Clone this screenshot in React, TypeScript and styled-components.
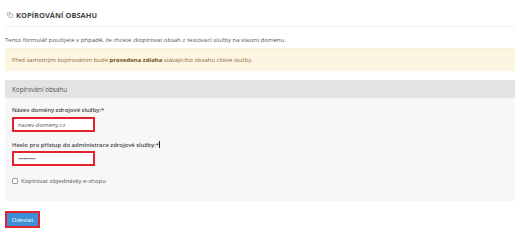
import React from 'react';
import styled, { createGlobalStyle } from 'styled-components';
import { Copy } from 'lucide-react';

const GlobalStyle = createGlobalStyle`
  html, body {
    margin: 0;
    padding: 0;
    background: #ffffff;
    font-family: "Open Sans", "Liberation Sans", sans-serif;
    color: #555555;
  }
  * { box-sizing: border-box; }
`;

const Page = styled.div`
  padding: 0 5px;
  width: 520px;
`;

const TitleBar = styled.div`
  height: 27px;
  padding: 4px 0 0 2px;
  display: flex;
  align-items: center;
  gap: 3px;
  border-bottom: 1px solid #efefef;
  color: #7a7a7a;
`;

const Title = styled.h1`
  margin: 0;
  font-size: 7.4px;
  font-weight: 700;
  color: #444444;
  letter-spacing: 0.05px;
`;

const Intro = styled.p`
  margin: 0 0 4px;
  padding-top: 9px;
  font-size: 6px;
  line-height: 8px;
  color: #555555;
`;

const Alert = styled.div`
  height: 23px;
  padding: 0 7px;
  line-height: 23px;
  font-size: 5.95px;
  background: #fcf5e2;
  border-top: 1px solid #faefd3;
  color: #8a6d3b;

  b {
    color: #6b5020;
    font-weight: 700;
  }
`;

const Panel = styled.section`
  margin-top: 9px;
  background: #f7f7f7;
`;

const PanelHeader = styled.div`
  height: 18px;
  padding-left: 7px;
  display: flex;
  align-items: center;
  background: #e3e3e3;
  font-size: 6.3px;
  color: #555555;
`;

const PanelBody = styled.div`
  padding: 8px 7px 16px;
`;

const Label = styled.label<{ $gap?: number }>`
  display: block;
  margin-top: ${(p) => p.$gap ?? 0}px;
  font-size: 5.9px;
  line-height: 8px;
  font-weight: 600;
  color: #444444;
`;

const Caret = styled.span`
  display: inline-block;
  width: 1px;
  height: 7px;
  margin-left: 0.5px;
  vertical-align: -1px;
  background: #222222;
`;

const Input = styled.input<{ $gap: number }>`
  display: block;
  margin-top: ${(p) => p.$gap}px;
  width: 83px;
  height: 15px;
  padding: 0 4px;
  border: 2px solid #e3232f;
  background: #ffffff;
  font-family: "Open Sans", "Liberation Sans", sans-serif;
  font-size: 5.9px;
  color: #555555;
  outline: none;
  letter-spacing: ${(p) => (p.type === 'password' ? '-0.5px' : '0')};
`;

const CheckRow = styled.label`
  margin-top: 11px;
  display: flex;
  align-items: center;
  gap: 3px;
  height: 8px;
  font-size: 6px;
  color: #555555;
`;

const Box = styled.span`
  width: 6px;
  height: 6px;
  border: 1px solid #9a9a9a;
  border-radius: 1px;
  background: #ffffff;
`;

const Submit = styled.button`
  margin-top: 10px;
  width: 35px;
  height: 17px;
  padding: 0;
  border: 2px solid #e3232f;
  background: #3d8fd6;
  color: #ffffff;
  font-family: "Open Sans", "Liberation Sans", sans-serif;
  font-size: 6px;
  cursor: pointer;
`;

export default function App() {
  return (
    <>
      <GlobalStyle />
      <Page>
        <TitleBar>
          <Copy size={6} strokeWidth={2} />
          <Title>KOPÍROVÁNÍ OBSAHU</Title>
        </TitleBar>
        <Intro>
          Tento formulář použijete v případě, že chcete zkopírovat obsah z testovací služby na vlastní doménu.
        </Intro>
        <Alert>
          Před samotným kopírováním bude <b>provedena záloha</b> stávajícího obsahu cílové služby.
        </Alert>
        <Panel>
          <PanelHeader>Kopírování obsahu</PanelHeader>
          <PanelBody>
            <Label>Název domény zdrojové služby:*</Label>
            <Input $gap={3} type="text" defaultValue="nazev-domeny.cz" />
            <Label $gap={9}>
              Heslo pro přístup do administrace zdrojové služby:*
              <Caret />
            </Label>
            <Input $gap={2} type="password" defaultValue="heslo12345" />
            <CheckRow>
              <Box />
              Kopírovat objednávky e-shopu
            </CheckRow>
          </PanelBody>
        </Panel>
        <Submit type="button">Odeslat</Submit>
      </Page>
    </>
  );
}
